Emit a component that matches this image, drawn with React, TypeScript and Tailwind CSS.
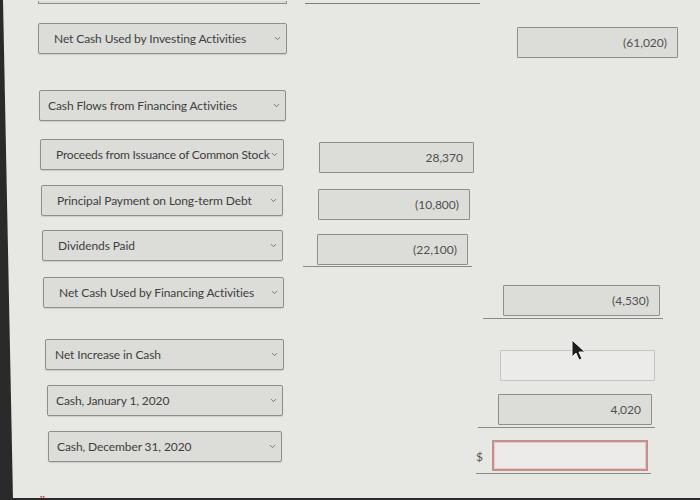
import React from "react";
import { ChevronDown } from "lucide-react";

type Row = {
  label: string;
  rowClass: string;
  selectClass: string;
  textClass: string;
  amount1?: string;
  amount2?: React.ReactNode;
};

function Select({ label, className, textClass }: { label: string; className: string; textClass: string }) {
  return (
    <div
      className={`flex h-[31px] shrink-0 items-center justify-between rounded-[2px] border border-[#8e8e8c] bg-[#dcdcd9] pr-[4px] shadow-[0_1px_1px_rgba(0,0,0,0.12)] ${className}`}
    >
      <span className={`whitespace-nowrap text-[12px] text-[#404040] ${textClass}`}>{label}</span>
      <ChevronDown size={9} strokeWidth={2.5} className="shrink-0 text-[#707070]" />
    </div>
  );
}

function Amount({ value, className = "" }: { value?: string; className?: string }) {
  return (
    <div
      className={`flex h-[31px] items-center justify-end rounded-[1px] border border-[#8e8e8c] bg-[#dcdcd9] pr-[10px] text-[12px] text-[#505050] ${className}`}
    >
      {value}
    </div>
  );
}

const rows: Row[] = [
  {
    label: "Net Cash Used by Investing Activities",
    rowClass: "mt-[19px]",
    selectClass: "ml-[25px] w-[249px]",
    textClass: "pl-[15px] tracking-[-0.1px]",
    amount2: <Amount value="(61,020)" className="ml-[230px] mt-[4px] w-[161px]" />,
  },
  {
    label: "Cash Flows from Financing Activities",
    rowClass: "mt-[36px]",
    selectClass: "ml-[26px] w-[247px]",
    textClass: "pl-[8px] tracking-[-0.1px]",
  },
  {
    label: "Proceeds from Issuance of Common Stock",
    rowClass: "mt-[18px]",
    selectClass: "ml-[27px] w-[244px]",
    textClass: "pl-[15px] tracking-[-0.2px]",
    amount1: "28,370",
  },
  {
    label: "Principal Payment on Long-term Debt",
    rowClass: "mt-[15px]",
    selectClass: "ml-[28px] w-[242px]",
    textClass: "pl-[15px] tracking-[-0.1px]",
    amount1: "(10,800)",
  },
  {
    label: "Dividends Paid",
    rowClass: "mt-[14px]",
    selectClass: "ml-[29px] w-[241px]",
    textClass: "pl-[15px] tracking-[-0.1px]",
    amount1: "(22,100)",
  },
  {
    label: "Net Cash Used by Financing Activities",
    rowClass: "mt-[16px]",
    selectClass: "ml-[30px] w-[241px]",
    textClass: "pl-[15px] tracking-[-0.1px]",
    amount2: (
      <div className="ml-[199px] mt-[8px] border-b border-[#8a8a88] pb-[2px] pl-[20px] pr-[3px]">
        <Amount value="(4,530)" className="w-[157px]" />
      </div>
    ),
  },
  {
    label: "Net Increase in Cash",
    rowClass: "mt-[31px]",
    selectClass: "ml-[32px] w-[239px]",
    textClass: "pl-[9px] tracking-[-0.1px]",
    amount2: (
      <div className="ml-[216px] mt-[11px] h-[31px] w-[155px] rounded-[1px] border border-[#c4c4c2] bg-[#ebebe9]" />
    ),
  },
  {
    label: "Cash, January 1, 2020",
    rowClass: "mt-[15px]",
    selectClass: "ml-[34px] w-[236px]",
    textClass: "pl-[8px] tracking-[-0.1px]",
    amount2: (
      <div className="ml-[195px] mt-[9px] border-b border-[#8a8a88] pb-[2px] pl-[20px] pr-[3px]">
        <Amount value="4,020" className="w-[154px]" />
      </div>
    ),
  },
  {
    label: "Cash, December 31, 2020",
    rowClass: "mt-[15px]",
    selectClass: "ml-[35px] w-[234px]",
    textClass: "pl-[8px] tracking-[-0.1px]",
    amount2: (
      <div className="ml-[194px] mt-[9px] flex items-end border-b border-[#8a8a88] pb-[2px] pr-[3px]">
        <span className="mb-[5px] w-[16px] text-[12px] text-[#555]">$</span>
        <div className="h-[31px] w-[156px] border-2 border-[#c98d8d] bg-[#ecebe9] shadow-[inset_0_0_0_1px_#e6c9c9]" />
      </div>
    ),
  },
];

export default function App() {
  return (
    <div className="relative flex h-[500px] w-[700px] overflow-hidden bg-[#e7e7e4] font-['Lato','Liberation_Sans',sans-serif]">
      <div className="h-full w-[13px] shrink-0 bg-[#2a2a2a] [clip-path:polygon(0_0,3px_0,13px_100%,0_100%)]" />
      <div className="flex flex-1 flex-col">
        <div className="flex h-[4px] items-end">
          <div className="ml-[25px] h-[3px] w-[249px] border-x border-b border-[#8e8e8c] bg-[#dcdcd9]" />
          <div className="ml-[18px] h-[1px] w-[175px] bg-[#7c7c7a]" />
        </div>
        {rows.map((r) => (
          <div key={r.label} className={`flex h-[31px] items-start ${r.rowClass}`}>
            <Select label={r.label} className={r.selectClass} textClass={r.textClass} />
            {r.amount1 &&
              (r.label === "Dividends Paid" ? (
                <div className="ml-[20px] mt-[4px] border-b border-[#8a8a88] pb-[1px] pl-[14px] pr-[4px]">
                  <Amount value={r.amount1} className="w-[151px]" />
                </div>
              ) : (
                <Amount
                  value={r.amount1}
                  className={r.label.startsWith("Proceeds") ? "ml-[35px] mt-[3px] w-[155px]" : "ml-[35px] mt-[4px] w-[152px]"}
                />
              ))}
            {r.amount2}
          </div>
        ))}
        <div className="ml-[27px] mt-auto h-[4px] w-[10px] text-[6px] leading-none text-[#d04848]">▪▪</div>
        <div className="h-[2px] bg-[#2a2a2a]" />
      </div>
      <svg
        className="absolute left-[570px] top-[339px]"
        width="18"
        height="24"
        viewBox="0 0 18 24"
      >
        <path d="M2 1 L2 18 L6 14 L9 21 L12 20 L9 13 L15 13 Z" fill="#1c1c1c" stroke="#f2f2f2" strokeWidth="1" />
      </svg>
    </div>
  );
}
